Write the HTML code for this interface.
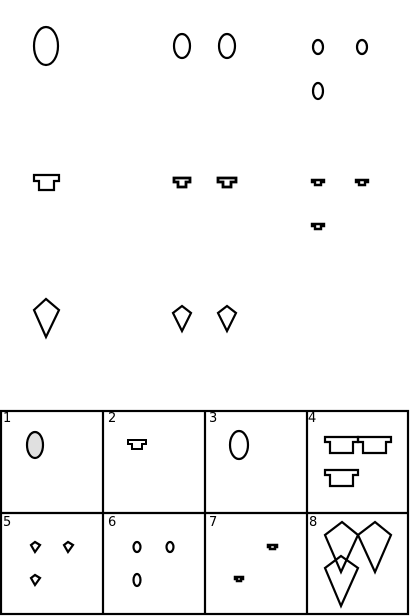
<!DOCTYPE html>
<html><head><style>body{margin:0;background:#fff}svg{display:block}</style></head><body>
<svg width="410" height="616" xmlns="http://www.w3.org/2000/svg" fill="none" stroke="#000" stroke-width="2.2">
<ellipse cx="46" cy="46" rx="12" ry="19"/>
<ellipse cx="182" cy="46" rx="8" ry="12"/><ellipse cx="227" cy="46" rx="8" ry="12"/>
<ellipse cx="318" cy="47" rx="5" ry="7"/><ellipse cx="362" cy="47" rx="5" ry="7"/><ellipse cx="318" cy="91" rx="5" ry="8"/>
<path d="M34 175H59V181H54V190H39V181H34Z"/>
<path d="M174 178H190V182H186V187H178V182H174Z" stroke-width="2.8"/>
<path d="M218 178H236V182H231V187H223V182H218Z" stroke-width="2.8"/>
<path d="M312 180H324V182H321V185H315V182H312Z" stroke-width="2.4"/>
<path d="M356 180H368V182H365V185H359V182H356Z" stroke-width="2.4"/>
<path d="M312 224H324V226H321V229H315V226H312Z" stroke-width="2.4"/>
<path d="M46 299L59 310L46 337L34 310Z"/>
<path d="M182 306L191 313L182 331L173 313Z"/>
<path d="M227 306L236 313L227 331L218 313Z"/>
<g stroke-width="2.2">
<rect x="1" y="411" width="407" height="203"/>
<path d="M1 513H408M103 411V614M205 411V614M307 411V614"/>
</g>
<ellipse cx="35" cy="445" rx="8" ry="13" fill="#e0e0e0"/>
<path d="M128 440H146V444H142V449H132V444H128Z" stroke-width="2"/>
<ellipse cx="239" cy="445" rx="9" ry="14"/>
<path d="M325 437H358V442H353V453H330V442H325Z"/>
<path d="M358 437H391V442H386V453H363V442H358Z"/>
<path d="M325 470H358V475H353V486H330V475H325Z"/>
<path d="M35 542L40 545L35 552L31 545Z"/><path d="M68 542L73 545L68 552L64 545Z"/><path d="M35 575L40 578L35 585L31 578Z"/>
<ellipse cx="137" cy="547" rx="3.5" ry="5"/><ellipse cx="170" cy="547" rx="3.5" ry="5"/><ellipse cx="137" cy="580" rx="3.5" ry="6"/>
<path d="M268 545H277V547H275V549H270V547H268Z" stroke-width="2.5"/>
<path d="M235 577H243V579H241V581H237V579H235Z" stroke-width="2.5"/>
<path d="M342 522L358 535L341 572L325 535Z"/>
<path d="M375 522L391 535L375 572L358 535Z"/>
<path d="M341 556L358 568L341 606L325 568Z"/>
<g fill="#000" stroke="none" font-family="'DejaVu Sans','Liberation Sans',sans-serif" font-size="13">
<text x="3" y="422">1</text><text x="108" y="422">2</text><text x="209" y="422">3</text><text x="308" y="422">4</text>
<text x="3" y="526">5</text><text x="108" y="526">6</text><text x="209" y="526">7</text><text x="309" y="526">8</text>
</g>
</svg>
</body></html>
